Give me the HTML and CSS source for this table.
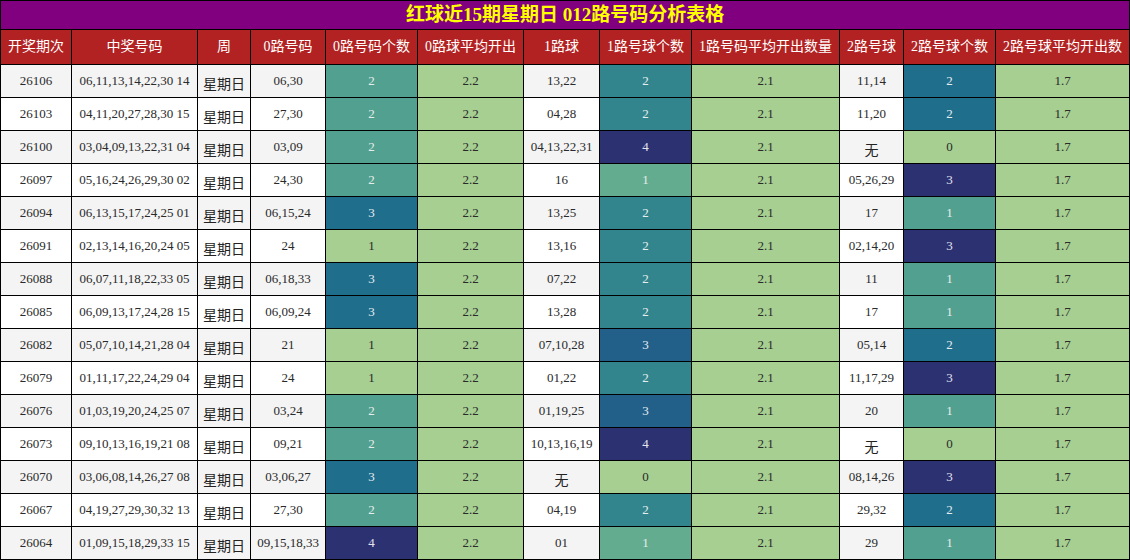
FILE: index.html
```html
<!DOCTYPE html>
<html lang="zh">
<head>
<meta charset="utf-8">
<title>红球近15期星期日 012路号码分析表格</title>
<link rel="stylesheet" href="styles.css">
</head>
<body>
<table class="grid">
<colgroup>
<col class="w71"><col class="w126"><col class="w53"><col class="w75"><col class="w92"><col class="w106"><col class="w76"><col class="w92"><col class="w148"><col class="w64"><col class="w92"><col class="w134">
</colgroup>
<thead>
<tr class="title-row"><th colspan="12">红球近15期星期日 012路号码分析表格</th></tr>
<tr class="head-row">
<th>开奖期次</th><th>中奖号码</th><th>周</th><th>0路号码</th><th>0路号码个数</th><th>0路球平均开出</th><th>1路球</th><th>1路号球个数</th><th>1路号码平均开出数量</th><th>2路号球</th><th>2路号球个数</th><th>2路号球平均开出数</th>
</tr>
</thead>
<tbody>
<tr class="odd"><td>26106</td><td>06,11,13,14,22,30 14</td><td class="wk">星期日</td><td>06,30</td><td class="s2">2</td><td class="avg">2.2</td><td>13,22</td><td class="s3">2</td><td class="avg">2.1</td><td>11,14</td><td class="s4">2</td><td class="avg">1.7</td></tr>
<tr class="even"><td>26103</td><td>04,11,20,27,28,30 15</td><td class="wk">星期日</td><td>27,30</td><td class="s2">2</td><td class="avg">2.2</td><td>04,28</td><td class="s3">2</td><td class="avg">2.1</td><td>11,20</td><td class="s4">2</td><td class="avg">1.7</td></tr>
<tr class="odd"><td>26100</td><td>03,04,09,13,22,31 04</td><td class="wk">星期日</td><td>03,09</td><td class="s2">2</td><td class="avg">2.2</td><td>04,13,22,31</td><td class="s6">4</td><td class="avg">2.1</td><td class="wk">无</td><td class="s0">0</td><td class="avg">1.7</td></tr>
<tr class="even"><td>26097</td><td>05,16,24,26,29,30 02</td><td class="wk">星期日</td><td>24,30</td><td class="s2">2</td><td class="avg">2.2</td><td>16</td><td class="s1">1</td><td class="avg">2.1</td><td>05,26,29</td><td class="s6">3</td><td class="avg">1.7</td></tr>
<tr class="odd"><td>26094</td><td>06,13,15,17,24,25 01</td><td class="wk">星期日</td><td>06,15,24</td><td class="s4">3</td><td class="avg">2.2</td><td>13,25</td><td class="s3">2</td><td class="avg">2.1</td><td>17</td><td class="s2">1</td><td class="avg">1.7</td></tr>
<tr class="even"><td>26091</td><td>02,13,14,16,20,24 05</td><td class="wk">星期日</td><td>24</td><td class="s0">1</td><td class="avg">2.2</td><td>13,16</td><td class="s3">2</td><td class="avg">2.1</td><td>02,14,20</td><td class="s6">3</td><td class="avg">1.7</td></tr>
<tr class="odd"><td>26088</td><td>06,07,11,18,22,33 05</td><td class="wk">星期日</td><td>06,18,33</td><td class="s4">3</td><td class="avg">2.2</td><td>07,22</td><td class="s3">2</td><td class="avg">2.1</td><td>11</td><td class="s2">1</td><td class="avg">1.7</td></tr>
<tr class="even"><td>26085</td><td>06,09,13,17,24,28 15</td><td class="wk">星期日</td><td>06,09,24</td><td class="s4">3</td><td class="avg">2.2</td><td>13,28</td><td class="s3">2</td><td class="avg">2.1</td><td>17</td><td class="s2">1</td><td class="avg">1.7</td></tr>
<tr class="odd"><td>26082</td><td>05,07,10,14,21,28 04</td><td class="wk">星期日</td><td>21</td><td class="s0">1</td><td class="avg">2.2</td><td>07,10,28</td><td class="s5">3</td><td class="avg">2.1</td><td>05,14</td><td class="s4">2</td><td class="avg">1.7</td></tr>
<tr class="even"><td>26079</td><td>01,11,17,22,24,29 04</td><td class="wk">星期日</td><td>24</td><td class="s0">1</td><td class="avg">2.2</td><td>01,22</td><td class="s3">2</td><td class="avg">2.1</td><td>11,17,29</td><td class="s6">3</td><td class="avg">1.7</td></tr>
<tr class="odd"><td>26076</td><td>01,03,19,20,24,25 07</td><td class="wk">星期日</td><td>03,24</td><td class="s2">2</td><td class="avg">2.2</td><td>01,19,25</td><td class="s5">3</td><td class="avg">2.1</td><td>20</td><td class="s2">1</td><td class="avg">1.7</td></tr>
<tr class="even"><td>26073</td><td>09,10,13,16,19,21 08</td><td class="wk">星期日</td><td>09,21</td><td class="s2">2</td><td class="avg">2.2</td><td>10,13,16,19</td><td class="s6">4</td><td class="avg">2.1</td><td class="wk">无</td><td class="s0">0</td><td class="avg">1.7</td></tr>
<tr class="odd"><td>26070</td><td>03,06,08,14,26,27 08</td><td class="wk">星期日</td><td>03,06,27</td><td class="s4">3</td><td class="avg">2.2</td><td class="wk">无</td><td class="s0">0</td><td class="avg">2.1</td><td>08,14,26</td><td class="s6">3</td><td class="avg">1.7</td></tr>
<tr class="even"><td>26067</td><td>04,19,27,29,30,32 13</td><td class="wk">星期日</td><td>27,30</td><td class="s2">2</td><td class="avg">2.2</td><td>04,19</td><td class="s3">2</td><td class="avg">2.1</td><td>29,32</td><td class="s4">2</td><td class="avg">1.7</td></tr>
<tr class="odd"><td>26064</td><td>01,09,15,18,29,33 15</td><td class="wk">星期日</td><td>09,15,18,33</td><td class="s6">4</td><td class="avg">2.2</td><td>01</td><td class="s1">1</td><td class="avg">2.1</td><td>29</td><td class="s2">1</td><td class="avg">1.7</td></tr>
</tbody>
</table>
</body>
</html>
```
FILE: styles.css
```css
html, body {
  margin: 0;
  padding: 0;
  background: #ffffff;
}

.grid {
  border-collapse: collapse;
  table-layout: fixed;
  width: 1130px;
  font-family: "Liberation Serif", "Noto Sans CJK SC", serif;
  font-size: 13px;
  color: #2a2a2a;
}

.w71 { width: 71px; }
.w126 { width: 126px; }
.w53 { width: 53px; }
.w75 { width: 75px; }
.w92 { width: 92px; }
.w106 { width: 106px; }
.w76 { width: 76px; }
.w148 { width: 148px; }
.w64 { width: 64px; }
.w134 { width: 134px; }

.grid th,
.grid td {
  border: 1px solid #000000;
  padding: 0;
  text-align: center;
  vertical-align: middle;
  white-space: nowrap;
  overflow: hidden;
}

.title-row th {
  height: 28px;
  line-height: 26px;
  background: #800080;
  color: #ffff00;
  font-size: 19px;
  font-weight: bold;
  font-family: "Liberation Serif", "Noto Sans CJK SC", serif;
}

.head-row th {
  height: 34px;
  line-height: 18px;
  background: #b22222;
  color: #ffffff;
  font-size: 14px;
  font-weight: normal;
}

.grid td {
  height: 32px;
  line-height: 16px;
}

.odd td {
  background: #f4f4f4;
}

.even td {
  background: #ffffff;
}

.grid td.wk {
  font-family: "Noto Sans CJK SC", sans-serif;
  font-size: 14px;
  height: 28px;
  padding-top: 4px;
  color: #222222;
}

.grid td.avg,
.grid td.s0 {
  background: #a6cf91;
  color: #2a2a2a;
}

.grid td.s1 {
  background: #63ac90;
  color: #e4ece8;
}

.grid td.s2 {
  background: #52a08f;
  color: #e6eeea;
}

.grid td.s3 {
  background: #32858c;
  color: #e8eef0;
}

.grid td.s4 {
  background: #1f6e8c;
  color: #e6ecf0;
}

.grid td.s5 {
  background: #22608a;
  color: #e6ecf0;
}

.grid td.s6 {
  background: #2c3172;
  color: #e4e4ee;
}
```
